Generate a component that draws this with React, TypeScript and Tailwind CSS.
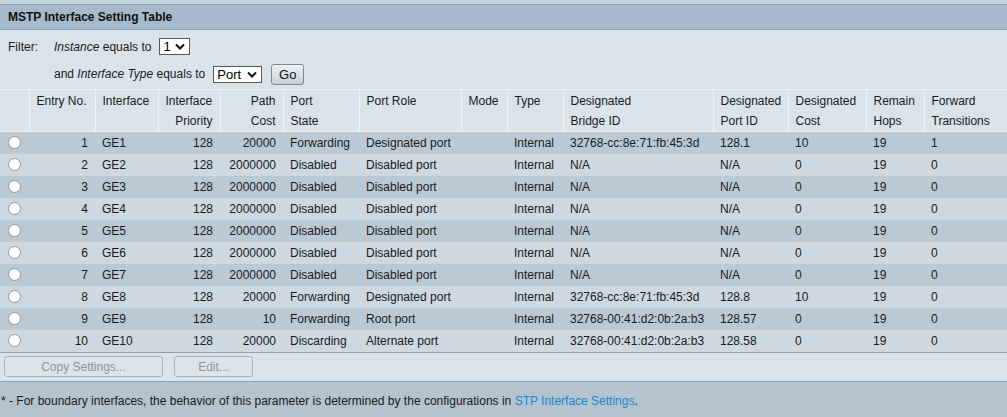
import React from "react";

type Row = {
  no: number;
  iface: string;
  prio: number;
  cost: string;
  state: string;
  role: string;
  bridge: string;
  portId: string;
  dCost: string;
  hops: number;
  fwd: number;
};

const rows: Row[] = [
  { no: 1, iface: "GE1", prio: 128, cost: "20000", state: "Forwarding", role: "Designated port", bridge: "32768-cc:8e:71:fb:45:3d", portId: "128.1", dCost: "10", hops: 19, fwd: 1 },
  { no: 2, iface: "GE2", prio: 128, cost: "2000000", state: "Disabled", role: "Disabled port", bridge: "N/A", portId: "N/A", dCost: "0", hops: 19, fwd: 0 },
  { no: 3, iface: "GE3", prio: 128, cost: "2000000", state: "Disabled", role: "Disabled port", bridge: "N/A", portId: "N/A", dCost: "0", hops: 19, fwd: 0 },
  { no: 4, iface: "GE4", prio: 128, cost: "2000000", state: "Disabled", role: "Disabled port", bridge: "N/A", portId: "N/A", dCost: "0", hops: 19, fwd: 0 },
  { no: 5, iface: "GE5", prio: 128, cost: "2000000", state: "Disabled", role: "Disabled port", bridge: "N/A", portId: "N/A", dCost: "0", hops: 19, fwd: 0 },
  { no: 6, iface: "GE6", prio: 128, cost: "2000000", state: "Disabled", role: "Disabled port", bridge: "N/A", portId: "N/A", dCost: "0", hops: 19, fwd: 0 },
  { no: 7, iface: "GE7", prio: 128, cost: "2000000", state: "Disabled", role: "Disabled port", bridge: "N/A", portId: "N/A", dCost: "0", hops: 19, fwd: 0 },
  { no: 8, iface: "GE8", prio: 128, cost: "20000", state: "Forwarding", role: "Designated port", bridge: "32768-cc:8e:71:fb:45:3d", portId: "128.8", dCost: "10", hops: 19, fwd: 0 },
  { no: 9, iface: "GE9", prio: 128, cost: "10", state: "Forwarding", role: "Root port", bridge: "32768-00:41:d2:0b:2a:b3", portId: "128.57", dCost: "0", hops: 19, fwd: 0 },
  { no: 10, iface: "GE10", prio: 128, cost: "20000", state: "Discarding", role: "Alternate port", bridge: "32768-00:41:d2:0b:2a:b3", portId: "128.58", dCost: "0", hops: 19, fwd: 0 },
];

const Chevron = () => (
  <svg width="10" height="7" viewBox="0 0 10 7" className="ml-1">
    <path d="M1 1.5 L5 5.5 L9 1.5" fill="none" stroke="#111" strokeWidth="2" />
  </svg>
);

const FakeSelect = ({ value, width }: { value: string; width: string }) => (
  <div className={`${width} h-[17px] bg-white border border-[#555] flex items-center justify-between pl-[3px] pr-[4px] text-[13px] leading-none text-black`}>
    <span>{value}</span>
    <Chevron />
  </div>
);

const Radio = () => (
  <div className="w-[13px] h-[13px] rounded-full bg-white border border-[#8d98a1] ml-[8px]" />
);

const th = "border-l border-[#eef2f5] align-top font-normal px-[7px] pt-[1px] leading-[20px]";
const td = "px-[7px] h-[22px] whitespace-nowrap";

export default function App() {
  return (
    <div className="w-[1007px] h-[417px] overflow-hidden bg-[#dae3ea] text-[12px] text-[#1a1a1a] font-['Liberation_Sans',Arial,sans-serif]">
      <div className="h-[5px] bg-[#c7d5de] border-b border-[#8fa2b1]" />
      <div className="h-[25px] bg-[#a6bacb] border-b border-[#8fa2b1] flex items-center pl-[8px] font-bold text-[12px] text-[#111]">
        MSTP Interface Setting Table
      </div>

      <div className="h-[59px] pl-[8px] pt-[8px] text-[12px]">
        <div className="flex items-center h-[17px]">
          <span className="w-[46px]">Filter:</span>
          <span>
            <i>Instance</i> equals to
          </span>
          <div className="ml-[8px]">
            <FakeSelect value="1" width="w-[31px]" />
          </div>
        </div>
        <div className="flex items-center h-[22px] mt-[8px] pl-[46px]">
          <span>
            and <i>Interface Type</i> equals to
          </span>
          <div className="ml-[8px]">
            <FakeSelect value="Port" width="w-[49px]" />
          </div>
          <button className="ml-[9px] w-[33px] h-[21px] rounded-[3px] border border-[#7d8a94] bg-gradient-to-b from-[#eef2f5] to-[#c5d0d8] text-[13px] text-[#111] leading-none">
            Go
          </button>
        </div>
      </div>

      <table className="w-[1007px] border-collapse table-fixed border-t border-[#eef2f5]">
        <colgroup>
          <col className="w-[29px]" />
          <col className="w-[66px]" />
          <col className="w-[63px]" />
          <col className="w-[62px]" />
          <col className="w-[63px]" />
          <col className="w-[76px]" />
          <col className="w-[102px]" />
          <col className="w-[46px]" />
          <col className="w-[56px]" />
          <col className="w-[150px]" />
          <col className="w-[75px]" />
          <col className="w-[78px]" />
          <col className="w-[58px]" />
          <col className="w-[83px]" />
        </colgroup>
        <thead>
          <tr className="h-[42px] border-b border-[#eef2f5] text-left">
            <th className="font-normal" />
            <th className={th + " text-left"}>Entry No.</th>
            <th className={th + " text-left"}>Interface</th>
            <th className={th + " text-left"}>
              Interface
              <br />
              <span className="block text-right">Priority</span>
            </th>
            <th className={th + " text-right"}>
              Path
              <br />
              Cost
            </th>
            <th className={th + " text-left"}>
              Port
              <br />
              State
            </th>
            <th className={th + " text-left"}>Port Role</th>
            <th className={th + " text-left"}>Mode</th>
            <th className={th + " text-left"}>Type</th>
            <th className={th + " text-left"}>
              Designated
              <br />
              Bridge ID
            </th>
            <th className={th + " text-left"}>
              Designated
              <br />
              Port ID
            </th>
            <th className={th + " text-left"}>
              Designated
              <br />
              Cost
            </th>
            <th className={th + " text-left"}>
              Remain
              <br />
              Hops
            </th>
            <th className={th + " text-left"}>
              Forward
              <br />
              Transitions
            </th>
          </tr>
        </thead>
        <tbody>
          {rows.map((r, i) => (
            <tr key={r.no} className={i % 2 === 0 ? "bg-[#bac9d4]" : "bg-[#cdd8e0]"}>
              <td className="h-[22px] p-0">
                <Radio />
              </td>
              <td className={td + " text-right"}>{r.no}</td>
              <td className={td}>{r.iface}</td>
              <td className={td + " text-right"}>{r.prio}</td>
              <td className={td + " text-right"}>{r.cost}</td>
              <td className={td}>{r.state}</td>
              <td className={td}>{r.role}</td>
              <td className={td} />
              <td className={td}>Internal</td>
              <td className={td}>{r.bridge}</td>
              <td className={td}>{r.portId}</td>
              <td className={td}>{r.dCost}</td>
              <td className={td}>{r.hops}</td>
              <td className={td}>{r.fwd}</td>
            </tr>
          ))}
        </tbody>
      </table>

      <div className="h-[29px] border-t border-[#8fa2b1] flex items-center pl-[4px] gap-[11px]">
        <button className="w-[159px] h-[21px] rounded-[3px] border border-[#aab5bd] bg-[#dce4ea] text-[#8b959c] text-[12px]">
          Copy Settings...
        </button>
        <button className="w-[79px] h-[21px] rounded-[3px] border border-[#aab5bd] bg-[#dce4ea] text-[#8b959c] text-[12px]">
          Edit...
        </button>
      </div>

      <div className="h-[36px] bg-[#b3c3cf] border-t border-[#8fa2b1] pl-[1px] pt-[10px] text-[12px] text-[#1a1a1a]">
        * - For boundary interfaces, the behavior of this parameter is determined by the configurations in{" "}
        <a className="text-[#1b88c8]">STP Interface Settings</a>.
      </div>
    </div>
  );
}
